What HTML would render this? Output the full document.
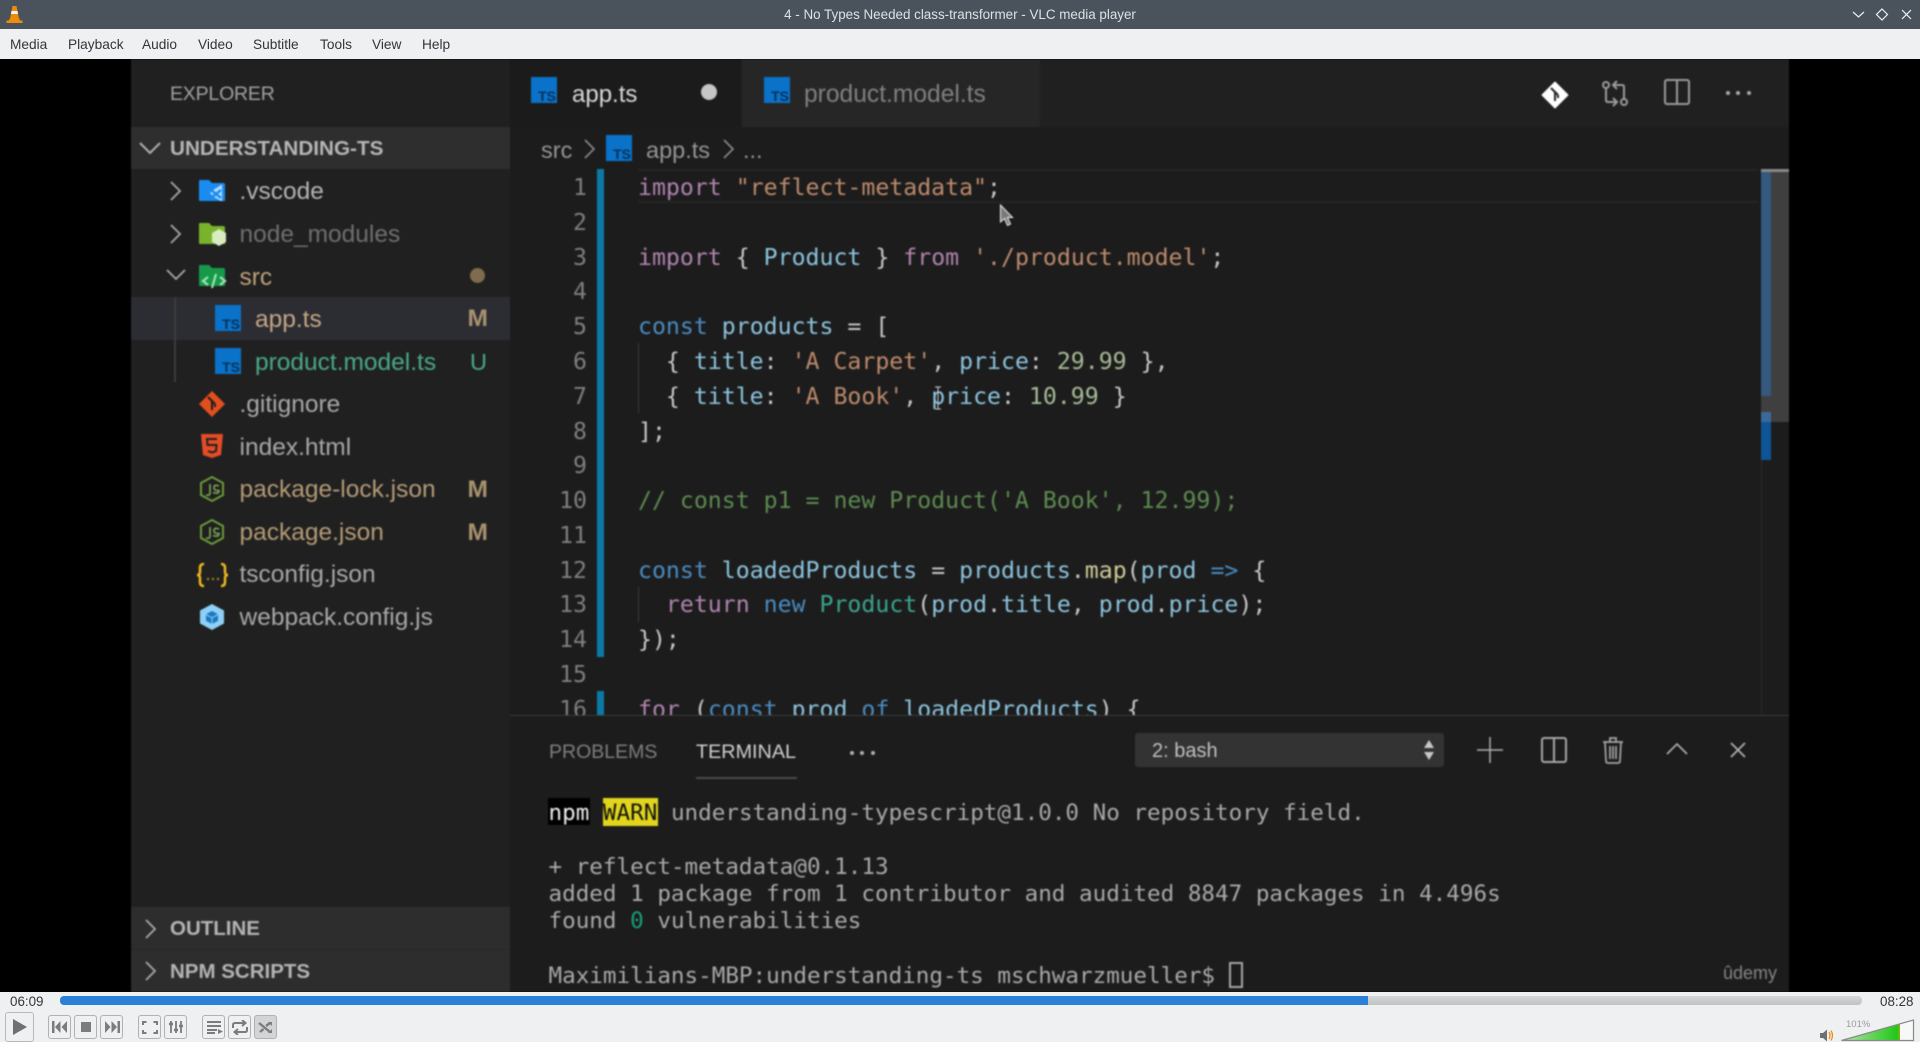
<!DOCTYPE html>
<html><head><meta charset="utf-8"><title>VLC</title>
<style>
html,body{margin:0;padding:0;width:1920px;height:1042px;overflow:hidden;background:#000;font-family:"Liberation Sans",sans-serif}
.a{position:absolute}
.t{position:absolute;white-space:pre}
#title{left:0;top:0;width:1920px;height:29px;background:#4a535c}
#menu{left:0;top:29px;width:1920px;height:30px;background:#eff0f1}
#menu span{position:absolute;top:8px;font-size:13.7px;line-height:16px;color:#31363b}
#video{left:0;top:59px;width:1920px;height:933px;background:#000;overflow:hidden}
#vi{position:absolute;left:0;top:-59px;width:1920px;height:1042px;filter:blur(.7px)}
.s{font-size:24.5px;line-height:34px;height:34px;margin-top:1px}
.c{font-family:"DejaVu Sans Mono",monospace;font-size:23.2px;line-height:34px;height:34px;color:#c8c8c8;left:638px;margin-top:1px}
.n{font-family:"DejaVu Sans Mono",monospace;font-size:23.2px;line-height:34px;height:34px;color:#7f7f7f;width:60px;text-align:right;left:527px;margin-top:1px}
.m{font-family:"DejaVu Sans Mono",monospace;font-size:22.6px;line-height:28px;height:28px;color:#a9a9a9;left:548.5px;margin-top:1px}
.k{color:#b084ad}.st{color:#bd8a6c}.b{color:#4a8cc0}.v{color:#8cc4de}.nu{color:#a7bb97}.g{color:#5d8a50}.cl{color:#3aa58d}.f{color:#cfcb9a}
.ts{position:absolute;width:26px;height:26px;background:#0a72c8;color:#0b3d68;font:bold 11px/11px "Liberation Sans",sans-serif;text-align:right}
.ts b{position:absolute;right:1px;bottom:0;font-size:14px;line-height:14px;font-weight:700;color:#063259}
.btn{position:absolute;top:1015px;width:23px;height:24px;border:1px solid #b0b2b4;border-radius:3px;box-sizing:border-box}
</style></head><body>

<div class="a" id="title">
<svg class="a" style="left:6px;top:5px" width="17" height="19" viewBox="0 0 17 19"><path d="M6.5 1h4l1 5h-6zM5 9h7l1 4.5H4z" fill="#ee8a0a"/><path d="M5.5 6h6l.6 3H4.9z" fill="#f4f4f4"/><path d="M3.8 13.5h9.4l.8 2H16.5v2.5H.5v-2.5H3z" fill="#f08c0c"/></svg>
<div class="t" style="left:0;width:1920px;text-align:center;top:6px;font-size:13.4px;line-height:17px;color:#dde1e5">4 - No Types Needed class-transformer - VLC media player</div>
<svg class="a" style="left:1850px;top:6px" width="66" height="17" fill="none" stroke="#eef0f2" stroke-width="1.2"><path d="M3 6l5.5 5 5.5-5"/><path d="M32 3l5.500 5.500-5.500 5.500-5.500-5.500z"/><path d="M52 4l9 9M61 4l-9 9"/></svg>
</div>

<div class="a" id="menu">
<span style="left:10px">Media</span><span style="left:68px">Playback</span><span style="left:142px">Audio</span><span style="left:198px">Video</span><span style="left:253px">Subtitle</span><span style="left:320px">Tools</span><span style="left:372px">View</span><span style="left:422px">Help</span>
</div>

<div class="a" id="video"><div id="vi">
<!-- backgrounds -->
<div class="a" style="left:131px;top:59px;width:379px;height:933px;background:#202020"></div>
<div class="a" style="left:510px;top:59px;width:1279px;height:68px;background:#202020"></div>
<div class="a" style="left:510px;top:127px;width:1279px;height:865px;background:#1c1c1c"></div>
<div class="a" style="left:510px;top:59px;width:231px;height:68px;background:#1b1b1b"></div>
<div class="a" style="left:742px;top:59px;width:298px;height:68px;background:#262626"></div>
<!-- Sidebar -->
<div class="t" style="left:170px;top:78px;font-size:19.500px;line-height:32px;color:#a0a0a0;letter-spacing:-.2px">EXPLORER</div>
<div class="a" style="left:131px;top:127px;width:379px;height:42px;background:#2e2e2e"></div>
<svg class="a" style="left:138px;top:140px" width="24" height="16" fill="none" stroke="#b0b0b0" stroke-width="2"><path d="M2 3l10 10L22 3"/></svg>
<div class="t" style="left:170px;top:132px;font-size:20.700px;font-weight:bold;line-height:34px;color:#b6b6b6">UNDERSTANDING-TS</div>

<div class="a" style="left:131px;top:297px;width:379px;height:43px;background:#2c2c33"></div>
<div class="a" style="left:174px;top:297px;width:2px;height:85px;background:#3c3c3c"></div>

<svg class="a" style="left:168px;top:180px" width="16" height="22" fill="none" stroke="#a8a8a8" stroke-width="1.800"><path d="M3 2l9 9-9 9"/></svg>
<svg class="a" style="left:168px;top:223px" width="16" height="22" fill="none" stroke="#a8a8a8" stroke-width="1.800"><path d="M3 2l9 9-9 9"/></svg>
<svg class="a" style="left:165px;top:268px" width="22" height="14" fill="none" stroke="#a8a8a8" stroke-width="1.800"><path d="M2 2l9 9 9-9"/></svg>

<!-- folder vscode -->
<svg class="a" style="left:198px;top:179px" width="30" height="25" viewBox="0 0 30 25"><path d="M1 2q0-1 1-1h9l3 3h11q2 0 2 2v16H2q-1 0-1-1z" fill="#1a8cf0"/><path d="M12 14l4-3.500 8-5v17l-8-4.500z" fill="#b5dcfb"/><path d="M13 11l10 8M13 19l10-8" stroke="#1a8cf0" stroke-width="2.500"/></svg>
<div class="t s" style="left:239.5px;top:174px;color:#b4b4b4">.vscode</div>
<svg class="a" style="left:198px;top:222px" width="30" height="26" viewBox="0 0 30 26"><path d="M1 2q0-1 1-1h9l3 3h11q2 0 2 2v16H2q-1 0-1-1z" fill="#79b32b"/><path d="M21 7l7 4v9l-7 4-7-4v-9z" fill="#d8ecc0"/></svg>
<div class="t s" style="left:239.5px;top:217px;color:#6f6f6f">node_modules</div>
<svg class="a" style="left:198px;top:264px" width="30" height="26" viewBox="0 0 30 26"><path d="M1 2q0-1 1-1h9l3 3h11q2 0 2 2v16H2q-1 0-1-1z" fill="#169a49"/><path d="M10 13l-5 4 5 4M22 13l5 4-5 4M18 10l-4 14" fill="none" stroke="#a4e0b6" stroke-width="2.200"/></svg>
<div class="t s" style="left:239.5px;top:260px;color:#bda17c">src</div>
<div class="a" style="left:470px;top:268px;width:15px;height:15px;border-radius:50%;background:#7f6b4e"></div>

<div class="ts" style="left:215px;top:305px"><b>TS</b></div>
<div class="t s" style="left:255px;top:302px;color:#c4a883">app.ts</div>
<div class="t s" style="left:467.5px;top:301px;color:#a8936e;font-size:24.5px;font-weight:bold">M</div>

<div class="ts" style="left:215px;top:348px"><b>TS</b></div>
<div class="t s" style="left:255px;top:345px;color:#4aa98a">product.model.ts</div>
<div class="t s" style="left:470px;top:344px;color:#4aa98a;font-size:23.500px">U</div>

<svg class="a" style="left:198px;top:390px" width="28" height="28" viewBox="0 0 28 28"><path d="M14 1l13 13-13 13L1 14z" fill="#e24e1e"/><path d="M10 7l7 7M14 11v9M17 14v3" stroke="#1c1c1c" stroke-width="2" fill="none"/></svg>
<div class="t s" style="left:239.5px;top:387px;color:#a8a8a8">.gitignore</div>

<svg class="a" style="left:200px;top:433px" width="24" height="26" viewBox="0 0 24 26"><path d="M1 1h22l-2 21-9 3-9-3z" fill="#e44d26"/><path d="M17 6H7l.5 6h9l-.5 6-4 1.500L8 18" fill="none" stroke="#202020" stroke-width="2"/></svg>
<div class="t s" style="left:239.5px;top:430px;color:#a8a8a8">index.html</div>

<svg class="a" style="left:198px;top:475px" width="28" height="28" viewBox="0 0 28 28" fill="none"><path d="M14 2l11 6v12l-11 6-11-6V8z" stroke="#6a9a3a" stroke-width="2"/><path d="M12 9v9q0 3-4 2M21 11q-5-2-5 1.500t5 3q0 4-6 2" stroke="#7fa854" stroke-width="1.600"/></svg>
<div class="t s" style="left:239.5px;top:472px;color:#b59b76">package-lock.json</div>
<div class="t s" style="left:467.5px;top:472px;color:#a8936e;font-size:24.5px;font-weight:bold">M</div>

<svg class="a" style="left:198px;top:518px" width="28" height="28" viewBox="0 0 28 28" fill="none"><path d="M14 2l11 6v12l-11 6-11-6V8z" stroke="#6a9a3a" stroke-width="2"/><path d="M12 9v9q0 3-4 2M21 11q-5-2-5 1.500t5 3q0 4-6 2" stroke="#7fa854" stroke-width="1.600"/></svg>
<div class="t s" style="left:239.5px;top:515px;color:#b59b76">package.json</div>
<div class="t s" style="left:467.5px;top:515px;color:#a8936e;font-size:24.5px;font-weight:bold">M</div>

<svg class="a" style="left:196px;top:562px" width="33" height="26" viewBox="0 0 33 26" fill="none" stroke="#eeb81c" stroke-width="2.500"><path d="M8 2Q4 2 4 6v4q0 3-3 3 3 0 3 3v4q0 4 4 4M25 2q4 0 4 4v4q0 3 3 3-3 0-3 3v4q0 4-4 4"/><path d="M11 17h2M16 17h2M21 17h2" stroke-width="2" stroke="#b09020"/></svg>
<div class="t s" style="left:239.5px;top:557px;color:#a8a8a8">tsconfig.json</div>

<svg class="a" style="left:199px;top:603px" width="26" height="28" viewBox="0 0 26 28"><path d="M13 1l12 6.500v13L13 27 1 20.500v-13z" fill="#8ed0f8"/><path d="M13 8l6 3.300v6.400L13 21l-6-3.300v-6.400z" fill="#1c78c0"/><path d="M7 11.500l6 3.300 6-3.300M13 15v6" stroke="#8ed0f8" stroke-width="1" fill="none"/></svg>
<div class="t s" style="left:239.5px;top:600px;color:#a8a8a8">webpack.config.js</div>

<div class="a" style="left:131px;top:907px;width:379px;height:85px;background:#2d2d2d"></div>
<div class="a" style="left:131px;top:949px;width:379px;height:1px;background:#262626"></div>
<svg class="a" style="left:143px;top:918px" width="16" height="22" fill="none" stroke="#a8a8a8" stroke-width="1.800"><path d="M3 2l9 9-9 9"/></svg>
<div class="t" style="left:170px;top:912px;font-size:20.500px;font-weight:bold;line-height:34px;color:#b4b4b4">OUTLINE</div>
<svg class="a" style="left:143px;top:960px" width="16" height="22" fill="none" stroke="#a8a8a8" stroke-width="1.800"><path d="M3 2l9 9-9 9"/></svg>
<div class="t" style="left:170px;top:955px;font-size:20.500px;font-weight:bold;line-height:34px;color:#b4b4b4">NPM SCRIPTS</div>

<!-- Tabs -->
<div class="ts" style="left:531px;top:77px"><b>TS</b></div>
<div class="t" style="left:572px;top:78px;font-size:24px;line-height:34px;color:#d8d8d8">app.ts</div>
<div class="a" style="left:701px;top:84px;width:16px;height:16px;border-radius:50%;background:#c6c6c6"></div>
<div class="ts" style="left:764px;top:77px"><b>TS</b></div>
<div class="t" style="left:804px;top:78px;font-size:24.600px;line-height:34px;color:#808080">product.model.ts</div>

<!-- action icons -->
<svg class="a" style="left:1540px;top:80px" width="30" height="30" viewBox="0 0 30 30"><path d="M15 2l13 13-13 13L2 15z" fill="#fff" stroke="#fff" stroke-linejoin="round"/><path d="M11 8l7 7M15 12v9M18 15l0 3" stroke="#222" stroke-width="2" fill="none"/></svg>
<svg class="a" style="left:1600px;top:78px" width="30" height="30" viewBox="0 0 30 30" fill="none" stroke="#9b9b9b" stroke-width="2"><circle cx="6" cy="7" r="3"/><circle cx="24" cy="24" r="3"/><path d="M6 10v12q0 2 2 2h8M13 20l4 4-4 4M24 21V9q0-2-2-2h-8M17 3l-4 4 4 4"/></svg>
<svg class="a" style="left:1663px;top:78px" width="28" height="28" fill="none" stroke="#9b9b9b" stroke-width="2"><rect x="2" y="2" width="24" height="24" rx="2"/><path d="M14 2v24"/></svg>
<div class="a" style="left:1726px;top:91px;width:4px;height:4px;border-radius:50%;background:#a8a8a8;box-shadow:10px 0 #a8a8a8,21px 0 #a8a8a8"></div>

<!-- breadcrumb -->
<div class="t" style="left:541px;top:133px;font-size:23.500px;line-height:34px;color:#959595">src</div>
<svg class="a" style="left:583px;top:138px" width="14" height="22" fill="none" stroke="#8a8a8a" stroke-width="1.600"><path d="M2 2l9 9-9 9"/></svg>
<div class="ts" style="left:606px;top:135px"><b>TS</b></div>
<div class="t" style="left:646px;top:133px;font-size:23.500px;line-height:34px;color:#959595">app.ts</div>
<svg class="a" style="left:722px;top:138px" width="14" height="22" fill="none" stroke="#8a8a8a" stroke-width="1.600"><path d="M2 2l9 9-9 9"/></svg>
<div class="t" style="left:743px;top:133px;font-size:23.500px;line-height:34px;color:#959595">...</div>

<!-- Code -->
<div class="a" style="left:510px;top:169px;width:1279px;height:546px;overflow:hidden" id="ed">
<div class="a" style="left:128px;top:0;width:1120px;height:34px;border-top:2px solid #252525;border-bottom:2px solid #252525;box-sizing:border-box"></div>
<div class="a" style="left:87px;top:0;width:7px;height:488px;background:#0b79a6"></div>
<div class="a" style="left:87px;top:522px;width:7px;height:24px;background:#0b79a6"></div>
<div class="a" style="left:128px;top:174px;width:1px;height:70px;background:#3a3a3a"></div>
<div class="a" style="left:128px;top:418px;width:1px;height:35px;background:#3a3a3a"></div>
<div class="a" style="left:1251px;top:0;width:1px;height:546px;background:#2a2a2a"></div>
<div class="a" style="left:1261px;top:1px;width:18px;height:252px;background:#3f3f3f"></div>
<div class="a" style="left:1251px;top:1px;width:10px;height:226px;background:#34597f"></div>
<div class="a" style="left:1251px;top:227px;width:10px;height:16px;background:#3f3f3f"></div>
<div class="a" style="left:1251px;top:243px;width:10px;height:10px;background:#3b6a9a"></div>
<div class="a" style="left:1251px;top:253px;width:10px;height:38px;background:#0e5596"></div>
<div class="a" style="left:1251px;top:0;width:28px;height:3px;background:#888"></div>
</div>
<div style="position:absolute;left:0;top:0;width:1920px;height:715px;overflow:hidden">
<div class="t n" style="top:170px">1</div><div class="t c" style="top:170px"><span class="k">import</span> <span class="st">"reflect-metadata"</span>;</div>
<div class="t n" style="top:205px">2</div>
<div class="t n" style="top:240px">3</div><div class="t c" style="top:240px"><span class="k">import</span> { <span class="v">Product</span> } <span class="k">from</span> <span class="st">'./product.model'</span>;</div>
<div class="t n" style="top:274px">4</div>
<div class="t n" style="top:309px">5</div><div class="t c" style="top:309px"><span class="b">const</span> <span class="v">products</span> = [</div>
<div class="t n" style="top:344px">6</div><div class="t c" style="top:344px">  { <span class="v">title</span>: <span class="st">'A Carpet'</span>, <span class="v">price</span>: <span class="nu">29.99</span> },</div>
<div class="t n" style="top:379px">7</div><div class="t c" style="top:379px">  { <span class="v">title</span>: <span class="st">'A Book'</span>, <span class="v">price</span>: <span class="nu">10.99</span> }</div>
<div class="t n" style="top:414px">8</div><div class="t c" style="top:414px">];</div>
<div class="t n" style="top:448px">9</div>
<div class="t n" style="top:483px">10</div><div class="t c g" style="top:483px">// const p1 = new Product('A Book', 12.99);</div>
<div class="t n" style="top:518px">11</div>
<div class="t n" style="top:553px">12</div><div class="t c" style="top:553px"><span class="b">const</span> <span class="v">loadedProducts</span> = <span class="v">products</span>.<span class="f">map</span>(<span class="v">prod</span> <span class="b">=&gt;</span> {</div>
<div class="t n" style="top:587px">13</div><div class="t c" style="top:587px">  <span class="k">return</span> <span class="b">new</span> <span class="cl">Product</span>(<span class="v">prod</span>.<span class="v">title</span>, <span class="v">prod</span>.<span class="v">price</span>);</div>
<div class="t n" style="top:622px">14</div><div class="t c" style="top:622px">});</div>
<div class="t n" style="top:657px">15</div>
<div class="t n" style="top:692px">16</div><div class="t c" style="top:692px"><span class="k">for</span> (<span class="b">const</span> <span class="v">prod</span> <span class="b">of</span> <span class="v">loadedProducts</span>) {</div>
</div>
<svg class="a" style="left:999px;top:204px" width="16" height="24" viewBox="0 0 16 24"><path d="M1.500 1v17l4-3.500 3 7 3-1.500-3-6.500h5z" fill="#7a7a7a" stroke="#eee" stroke-width="1"/></svg>
<svg class="a" style="left:934px;top:386px" width="9" height="24" fill="none" stroke="#d0d0d0" stroke-width="1"><path d="M1 1h6M4 1v22M1 23h6"/></svg>

<!-- Panel -->
<div class="a" style="left:510px;top:715px;width:1279px;height:1px;background:#3a3a3a"></div>
<div class="t" style="left:549px;top:735px;font-size:19.500px;line-height:34px;color:#7e7e7e">PROBLEMS</div>
<div class="t" style="left:696px;top:735px;font-size:19.800px;line-height:34px;color:#d0d0d0">TERMINAL</div>
<div class="a" style="left:696px;top:777px;width:101px;height:2px;background:#4a4a4a"></div>
<div class="a" style="left:850px;top:751px;width:4px;height:4px;border-radius:50%;background:#b0b0b0;box-shadow:10px 0 #b0b0b0,21px 0 #b0b0b0"></div>
<div class="a" style="left:1135px;top:733px;width:309px;height:34px;background:#333;border-radius:3px"></div>
<div class="t" style="left:1152px;top:734px;font-size:20px;line-height:34px;color:#c0c0c0">2: bash</div>
<svg class="a" style="left:1423px;top:739px" width="12" height="22" fill="#c8c8c8"><path d="M6 1l5 8H1zM6 21l5-8H1z"/></svg>
<svg class="a" style="left:1476px;top:736px" width="28" height="28" fill="none" stroke="#b0b0b0" stroke-width="1.500"><path d="M14 1v26M1 14h26"/></svg>
<svg class="a" style="left:1541px;top:737px" width="26" height="26" fill="none" stroke="#a5a5a5" stroke-width="2"><rect x="1" y="1" width="24" height="24" rx="2"/><path d="M13 1v24"/></svg>
<svg class="a" style="left:1602px;top:736px" width="22" height="28" fill="none" stroke="#a5a5a5" stroke-width="1.700"><path d="M1 6h20M3 6l1 19q0 2 2 2h10q2 0 2-2l1-19M8 6V2h6v4M8 10v13M11 10v13M14 10v13"/></svg>
<svg class="a" style="left:1665px;top:741px" width="24" height="16" fill="none" stroke="#b0b0b0" stroke-width="1.600"><path d="M2 13L12 3l10 10"/></svg>
<svg class="a" style="left:1729px;top:741px" width="18" height="18" fill="none" stroke="#b0b0b0" stroke-width="1.700"><path d="M2 2l14 14M16 2L2 16"/></svg>

<!-- Terminal -->
<div class="a" style="left:548px;top:798px;width:42px;height:27px;background:#000"></div>
<div class="a" style="left:603px;top:798px;width:55px;height:28px;background:#e2d61c"></div>
<div class="t m" style="top:798px"><span style="color:#eee">npm</span> <span style="color:#111">WARN</span> understanding-typescript@1.0.0 No repository field.</div>
<div class="t m" style="top:852px">+ reflect-metadata@0.1.13</div>
<div class="t m" style="top:879px">added 1 package from 1 contributor and audited 8847 packages in 4.496s</div>
<div class="t m" style="top:906px">found <span style="color:#1a9f7a">0</span> vulnerabilities</div>
<div class="t m" style="top:961px">Maximilians-MBP:understanding-ts mschwarzmueller$</div>
<div class="a" style="left:1229px;top:962px;width:14px;height:26px;border:2px solid #a5a5a5;box-sizing:border-box"></div>
<div class="t" style="left:1723px;top:961px;font-size:18px;line-height:24px;color:#858585">ûdemy</div>
</div></div>

<!-- Controls -->
<div class="a" style="left:0;top:992px;width:1920px;height:50px;background:#eff0f1"></div>
<div class="t" style="left:10px;top:994px;font-size:13.4px;line-height:16px;color:#31363b">06:09</div>
<div class="t" style="left:1880px;top:994px;font-size:13.4px;line-height:16px;color:#31363b">08:28</div>
<div class="a" style="left:60px;top:996px;width:1802px;height:9px;border-radius:4px;background:linear-gradient(#d6d7d9,#c0c2c4)"></div>
<div class="a" style="left:60px;top:996px;width:1308px;height:9px;border-radius:4px 0 0 4px;background:#2a7fd6"></div>

<div class="a" style="left:5px;top:1012px;width:29px;height:30px;border:1px solid #b8babc;border-radius:3px;box-sizing:border-box"></div>
<svg class="a" style="left:12px;top:1018px" width="16" height="18"><path d="M1 1l14 8-14 8z" fill="#6e7072"/></svg>

<div class="btn" style="left:48px"></div><svg class="a" style="left:52px;top:1021px" width="16" height="12" fill="#7a7c7e"><path d="M0 0h2.500v12H0zM8.500 0v12L3 6zM15 0v12L9.500 6z"/></svg>
<div class="btn" style="left:74px"></div><div class="a" style="left:81px;top:1022px;width:10px;height:10px;background:#7a7c7e"></div>
<div class="btn" style="left:100px"></div><svg class="a" style="left:104px;top:1021px" width="16" height="12" fill="#7a7c7e"><path d="M16 0h-2.500v12H16zM7.500 0v12L13 6zM1 0v12L6.500 6z"/></svg>

<div class="btn" style="left:138px"></div><svg class="a" style="left:142px;top:1021px" width="16" height="13" fill="none" stroke="#7a7c7e" stroke-width="2"><path d="M1 4V1h3.500M11.500 1H15v3M15 9v3h-3.500M4.500 12H1V9"/></svg>
<div class="btn" style="left:164px"></div><svg class="a" style="left:168px;top:1020px" width="16" height="14" stroke="#7a7c7e" stroke-width="1.800" fill="#7a7c7e"><path d="M3 1v12M8 1v12M13 1v12"/><path d="M1 4h4M6 10h4M11 6h4" stroke-width="2.500"/></svg>

<div class="btn" style="left:202px"></div><svg class="a" style="left:206px;top:1021px" width="17" height="13" fill="#7a7c7e"><path d="M1 0h14v2H1zM1 4h14v2H1zM1 8h10v2H1zM1 11h8v2H1zM12 8l5 2.500-5 2.500z"/></svg>
<div class="btn" style="left:228px"></div><svg class="a" style="left:232px;top:1020px" width="16" height="15" fill="none" stroke="#7a7c7e" stroke-width="2"><path d="M1 8V5q0-2 2-2h9M10 0l3.500 3L10 6M15 7v3q0 2-2 2H4M6 9l-3.500 3L6 15"/></svg>
<div class="btn" style="left:254px;background:#d2d4d6"></div><svg class="a" style="left:258px;top:1021px" width="15" height="13" fill="#7a7c7e" stroke="#7a7c7e" stroke-width="2.400"><path d="M1 2l11 9M2 11l3.500-3M8 5l4-3" fill="none"/><path d="M10 1h4v4zM10 12h4V8z" stroke="none"/></svg>

<svg class="a" style="left:1820px;top:1029px" width="15" height="13"><path d="M0 4h3l4-3.500v12L3 9H0z" fill="#6e7072"/><path d="M9 3q2 3.500 0 7M11 1.500q3 5 0 10" fill="none" stroke="#f08c1a" stroke-width="1.300"/></svg>
<div class="t" style="left:1846px;top:1019px;font-size:9.500px;line-height:12px;color:#9a9c9e">101%</div>
<svg class="a" style="left:1840px;top:1018px" width="76" height="24"><defs><linearGradient id="vg"><stop offset="0" stop-color="#b6e3a8"/><stop offset=".95" stop-color="#21c81a"/><stop offset="1" stop-color="#8db010"/></linearGradient></defs><path d="M1.500 22.500L73.500 2v20.500z" fill="#f8f8f8"/><path d="M1.500 22.500L60 5.800v16.700z" fill="url(#vg)"/><path d="M1.500 22.500L73.500 2v20.500z" fill="none" stroke="#88898b" stroke-width="1.200"/></svg>
</body></html>
